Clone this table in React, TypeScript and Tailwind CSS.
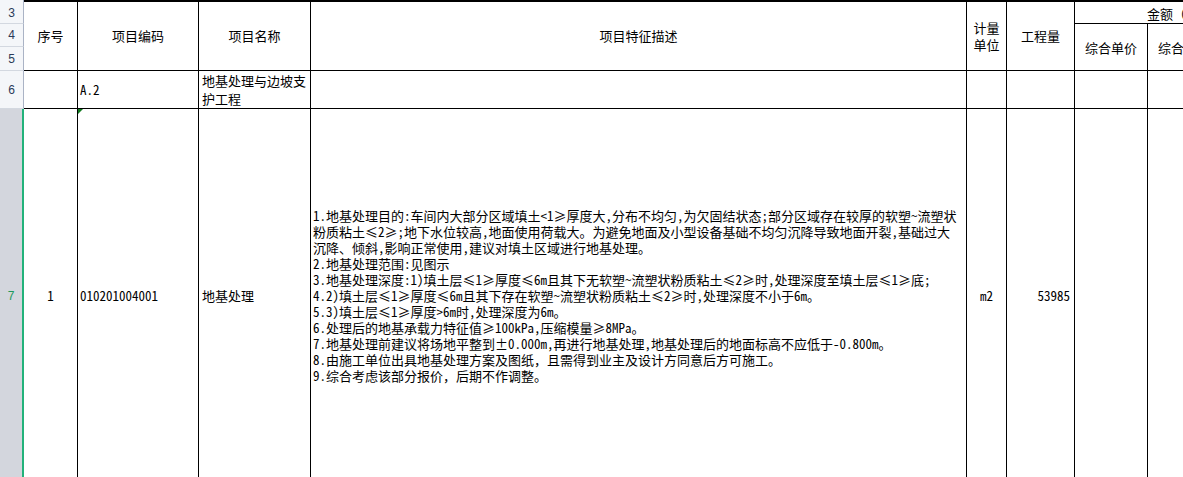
const desc = [
  '1.地基处理目的:车间内大部分区域填土<1≥厚度大,分布不均匀,为欠固结状态;部分区域存在较厚的软塑~流塑状',
  '粉质粘土≤2≥;地下水位较高,地面使用荷载大。为避免地面及小型设备基础不均匀沉降导致地面开裂,基础过大',
  '沉降、倾斜,影响正常使用,建议对填土区域进行地基处理。',
  '2.地基处理范围:见图示',
  '3.地基处理深度:1)填土层≤1≥厚度≤6m且其下无软塑~流塑状粉质粘土≤2≥时,处理深度至填土层≤1≥底;',
  '4.2)填土层≤1≥厚度≤6m且其下存在软塑~流塑状粉质粘土≤2≥时,处理深度不小于6m。',
  '5.3)填土层≤1≥厚度>6m时,处理深度为6m。',
  '6.处理后的地基承载力特征值≥100kPa,压缩模量≥8MPa。',
  '7.地基处理前建议将场地平整到±0.000m,再进行地基处理,地基处理后的地面标高不应低于-0.800m。',
  '8.由施工单位出具地基处理方案及图纸，且需得到业主及设计方同意后方可施工。',
  '9.综合考虑该部分报价，后期不作调整。',
];

// the sheet font is a fixed grid: ascii half width, everything else full width
function Txt({ text }: { text: string }) {
  return (
    <>
      {Array.from(text).map((ch, i) =>
        /[\x20-\x7e]/.test(ch) ? (
          <span key={i} className="inline-block w-[6.5px] text-center [font-feature-settings:'hwid']">
            {ch}
          </span>
        ) : (
          <span key={i} className="inline-block w-[13px] text-center">
            {ch}
          </span>
        )
      )}
    </>
  );
}

const cell = 'border-r border-b border-black flex items-center';
const rowHead =
  'border-r border-b border-r-[#aab3c5] border-b-[#d3d8e0] bg-[#f4f6f9] flex items-center justify-center text-[12px] text-[#2a3a58] font-["Liberation_Sans",sans-serif]';

export default function App() {
  return (
    <div className='w-[1183px] h-[477px] overflow-hidden bg-white text-black text-[13px] font-["Noto_Sans_CJK_SC","Liberation_Sans",sans-serif]'>
      <div className="grid w-[1285px] grid-cols-[24px_54px_121px_112px_656px_40px_68px_73px_73px_64px] grid-rows-[2px_22px_23px_24px_38px_374px]">
        {/* top edge */}
        <div className="col-start-1 row-start-1 bg-[#f4f6f9] border-r border-[#aab3c5]" />
        <div className="col-start-2 col-span-9 row-start-1 bg-black" />

        {/* row numbers */}
        <div className={`col-start-1 row-start-2 ${rowHead}`}>3</div>
        <div className={`col-start-1 row-start-3 ${rowHead}`}>4</div>
        <div className={`col-start-1 row-start-4 ${rowHead}`}>5</div>
        <div className={`col-start-1 row-start-5 ${rowHead}`}>6</div>
        <div className='col-start-1 row-start-6 bg-[#d3d6dd] border-r-2 border-[#22b27a] flex items-center justify-center text-[12px] text-[#1f9a5c] font-["Liberation_Sans",sans-serif]'>
          7
        </div>

        {/* header */}
        <div className={`col-start-2 row-start-2 row-span-3 justify-center ${cell}`}>序号</div>
        <div className={`col-start-3 row-start-2 row-span-3 justify-center ${cell}`}>项目编码</div>
        <div className={`col-start-4 row-start-2 row-span-3 justify-center ${cell}`}>项目名称</div>
        <div className={`col-start-5 row-start-2 row-span-3 justify-center ${cell}`}>项目特征描述</div>
        <div className={`col-start-6 row-start-2 row-span-3 justify-center text-center leading-[17px] ${cell}`}>
          计量
          <br />
          单位
        </div>
        <div className={`col-start-7 row-start-2 row-span-3 justify-center ${cell}`}>工程量</div>
        <div className={`col-start-8 col-span-3 row-start-2 justify-center pt-[3px] ${cell}`}>金额（元）</div>
        <div className={`col-start-8 row-start-3 row-span-2 justify-center pt-[2px] ${cell}`}>综合单价</div>
        <div className={`col-start-9 row-start-3 row-span-2 justify-center pt-[2px] ${cell}`}>综合合价</div>
        <div className={`col-start-10 row-start-3 row-span-2 justify-center pt-[2px] ${cell}`}>其中</div>

        {/* row 6 */}
        <div className={`col-start-2 row-start-5 ${cell}`} />
        <div className={`col-start-3 row-start-5 pl-[2px] ${cell}`}>
          <Txt text="A.2" />
        </div>
        <div className={`col-start-4 row-start-5 pl-[3px] leading-[18px] ${cell}`}>
          地基处理与边坡支
          <br />
          护工程
        </div>
        <div className={`col-start-5 row-start-5 ${cell}`} />
        <div className={`col-start-6 row-start-5 ${cell}`} />
        <div className={`col-start-7 row-start-5 ${cell}`} />
        <div className={`col-start-8 row-start-5 ${cell}`} />
        <div className={`col-start-9 row-start-5 ${cell}`} />
        <div className={`col-start-10 row-start-5 ${cell}`} />

        {/* row 7 */}
        <div className={`col-start-2 row-start-6 justify-center ${cell}`}>
          <Txt text="1" />
        </div>
        <div className={`col-start-3 row-start-6 pl-[2px] relative ${cell}`}>
          <span className="absolute left-0 top-0 w-0 h-0 border-t-[5px] border-r-[5px] border-t-[#117a1e] border-r-transparent" />
          <Txt text="010201004001" />
        </div>
        <div className={`col-start-4 row-start-6 pl-[3px] ${cell}`}>地基处理</div>
        <div className={`col-start-5 row-start-6 pl-[2px] ${cell}`}>
          <div className="flex flex-col leading-[16px] whitespace-nowrap">
            {desc.map((l, i) => (
              <div key={i}>
                <Txt text={l} />
              </div>
            ))}
          </div>
        </div>
        <div className={`col-start-6 row-start-6 justify-center ${cell}`}>
          <Txt text="m2" />
        </div>
        <div className={`col-start-7 row-start-6 justify-end pr-[4px] ${cell}`}>
          <Txt text="53985" />
        </div>
        <div className={`col-start-8 row-start-6 ${cell}`} />
        <div className={`col-start-9 row-start-6 ${cell}`} />
        <div className={`col-start-10 row-start-6 ${cell}`} />
      </div>
    </div>
  );
}
